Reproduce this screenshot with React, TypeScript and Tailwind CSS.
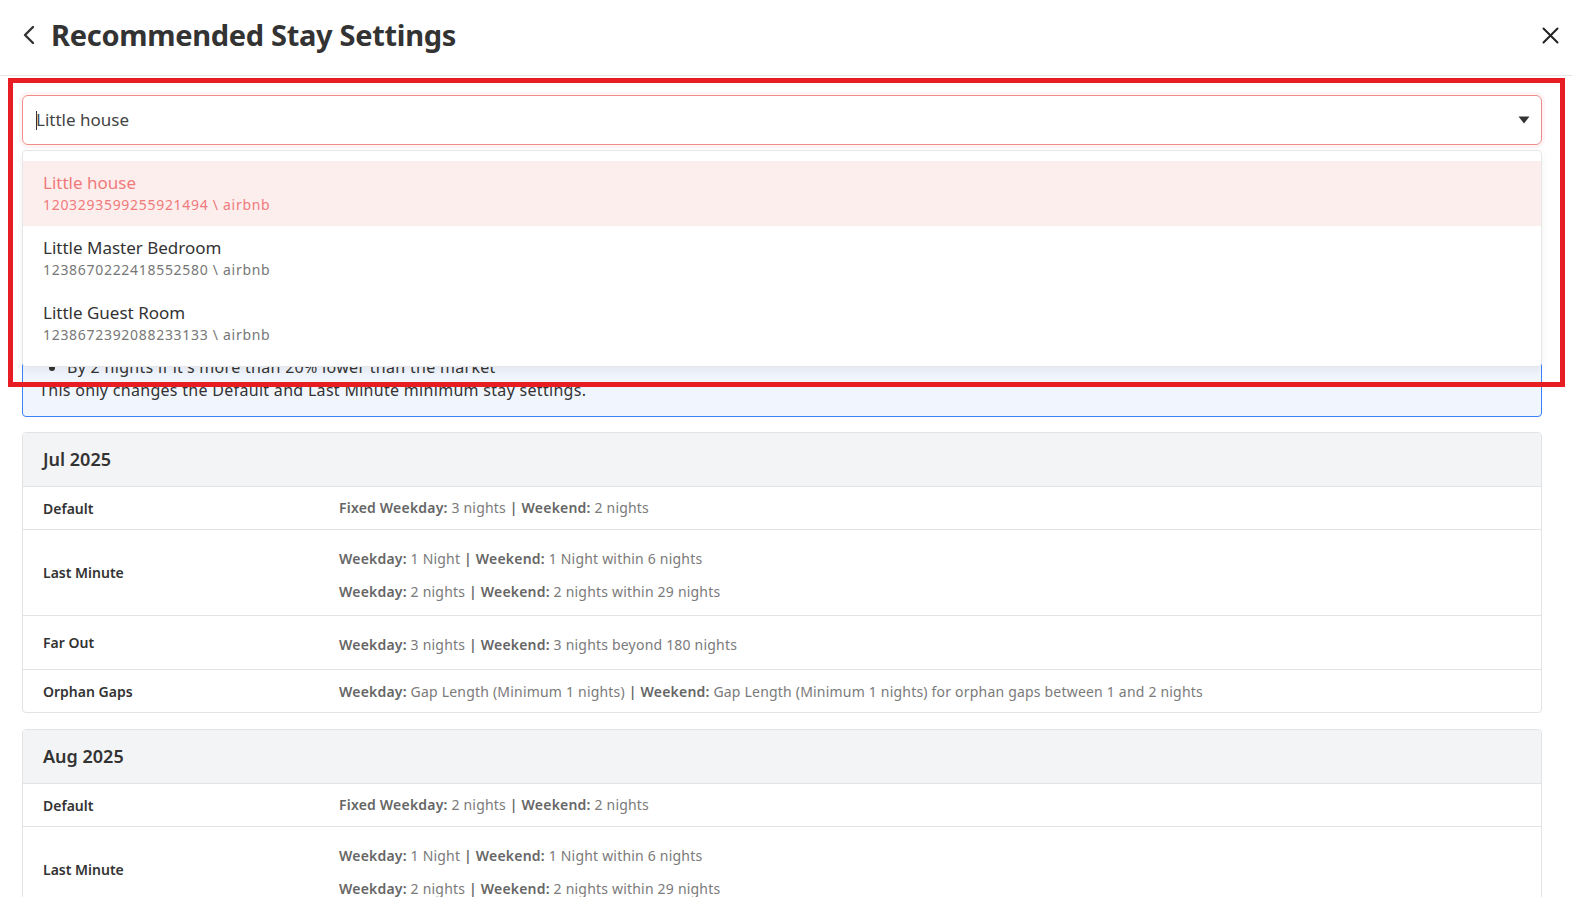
import React from "react";

type Line = { parts: { b?: boolean; t: string }[] };

const F = { fontFamily: '"Noto Sans", "Open Sans", sans-serif' };

function Val({ parts }: Line) {
  return (
    <div className="leading-[20px]">
      {parts.map((p, i) =>
        p.b ? (
          <span key={i} className="font-semibold text-[#666]">{p.t}</span>
        ) : (
          <span key={i}>{p.t}</span>
        )
      )}
    </div>
  );
}

function Row({ label, lines, h, extra }: { label: string; lines: Line[]; h: string; extra?: string }) {
  return (
    <div className={`flex items-center border-t border-[#e3e3e3] ${h}`}>
      <div className="w-[316px] pl-[20px] text-[14px] font-semibold text-[#333]">{label}</div>
      <div className={`flex flex-col ${extra ?? ""} text-[14px] tracking-[0.2px] text-[#7a7a7a]`}>
        {lines.map((l, i) => (
          <Val key={i} parts={l.parts} />
        ))}
      </div>
    </div>
  );
}

function MonthCard({ month, def, rows }: { month: string; def: string; rows: boolean }) {
  return (
    <div className="rounded-[4px] border border-[#e3e3e3] overflow-hidden">
      <div className="h-[53px] flex items-center bg-[#f3f4f6] pl-[20px] text-[18px] font-semibold text-[#333]">
        {month}
      </div>
      <Row
        label="Default"
        h="h-[43px]"
        lines={[{ parts: [{ b: true, t: "Fixed Weekday:" }, { t: ` ${def} nights ` }, { b: true, t: "|" }, { b: true, t: " Weekend:" }, { t: " 2 nights" }] }]}
      />
      <Row
        label="Last Minute"
        h="h-[86px]"
        extra="gap-[13px] pt-[5px]"
        lines={[
          { parts: [{ b: true, t: "Weekday:" }, { t: " 1 Night " }, { b: true, t: "|" }, { b: true, t: " Weekend:" }, { t: " 1 Night within 6 nights" }] },
          { parts: [{ b: true, t: "Weekday:" }, { t: " 2 nights " }, { b: true, t: "|" }, { b: true, t: " Weekend:" }, { t: " 2 nights within 29 nights" }] },
        ]}
      />
      {rows && (
        <>
          <Row
            label="Far Out"
            h="h-[54px]"
            extra="pt-[4px]"
            lines={[{ parts: [{ b: true, t: "Weekday:" }, { t: " 3 nights " }, { b: true, t: "|" }, { b: true, t: " Weekend:" }, { t: " 3 nights beyond 180 nights" }] }]}
          />
          <Row
            label="Orphan Gaps"
            h="h-[43px]"
            extra="pt-[1px]"
            lines={[
              {
                parts: [
                  { b: true, t: "Weekday:" },
                  { t: " Gap Length (Minimum 1 nights) " },
                  { b: true, t: "|" },
                  { b: true, t: " Weekend:" },
                  { t: " Gap Length (Minimum 1 nights) for orphan gaps between 1 and 2 nights" },
                ],
              },
            ]}
          />
        </>
      )}
    </div>
  );
}

const options = [
  { name: "Little house", id: "1203293599255921494 \\ airbnb", active: true },
  { name: "Little Master Bedroom", id: "1238670222418552580 \\ airbnb" },
  { name: "Little Guest Room", id: "1238672392088233133 \\ airbnb" },
];

export default function App() {
  return (
    <div className="relative w-full h-[897px] overflow-hidden bg-white" style={F}>
      {/* Header */}
      <div className="h-[76px] flex items-center justify-between border-b border-[#e5e5e5] pl-[22px] pr-[13px]">
        <div className="flex items-center gap-[15px] pb-[6px]">
          <svg width="14" height="20" viewBox="0 0 14 20" fill="none">
            <path d="M11 2 L3 10 L11 18" stroke="#333" strokeWidth="2.4" strokeLinecap="round" strokeLinejoin="round" />
          </svg>
          <h1 className="text-[29px] font-bold text-[#333] tracking-[-0.3px]">Recommended Stay Settings</h1>
        </div>
        <svg width="17" height="17" viewBox="0 0 17 17" className="mb-[4px]">
          <path d="M1.5 1.5 L15.5 15.5 M15.5 1.5 L1.5 15.5" stroke="#222" strokeWidth="2" strokeLinecap="round" />
        </svg>
      </div>

      <div className="pl-[22px] pr-[30px] pt-[19px]">
        {/* Select */}
        <div className="relative">
          <div className="h-[50px] flex items-center justify-between rounded-[6px] border border-[#f08c8c] shadow-[0_0_0_3px_rgba(240,120,120,0.08)] pl-[13px] pr-[11px]">
            <div className="flex items-center text-[17px] text-[#444]">
              <span className="w-px h-[19px] bg-[#333] mr-[-1px]" />
              <span>Little house</span>
            </div>
            <svg width="12" height="8" viewBox="0 0 12 8">
              <path d="M0.5 0.5 H11.5 L6 7.5 Z" fill="#333" />
            </svg>
          </div>

          {/* Dropdown menu overlay */}
          <div className="absolute left-0 right-0 top-[55px] z-20 rounded-[4px] border border-[#e6e6e6] bg-white shadow-[0_4px_10px_rgba(0,0,0,0.06)] pt-[10px] pb-[10px]">
            {options.map((o) => (
              <div
                key={o.name}
                className={`h-[65px] flex flex-col justify-center pl-[20px] ${o.active ? "bg-[#fdeeee]" : ""}`}
              >
                <div className={`text-[17px] leading-[22px] ${o.active ? "text-[#f07a7a]" : "text-[#333]"}`}>{o.name}</div>
                <div className={`text-[14px] leading-[22px] tracking-[0.7px] ${o.active ? "text-[#f07a7a]" : "text-[#777]"}`}>{o.id}</div>
              </div>
            ))}
          </div>
        </div>

        {/* Info box (partially covered) */}
        <div className="mt-[15px] rounded-[4px] border border-[#3b82f6] bg-[#f1f6fe] pl-[16px] pt-[11px] pb-[14px] text-[16px] leading-[23px] tracking-[0.3px] text-[#333]">
          <div className="font-semibold">Recommendations</div>
          <div>We will adjust your minimum stay settings based on the market:</div>
          <div>Default minimum stay:</div>
          <ul className="pl-[28px] list-disc">
            <li>Increase by 1 night if it's more than 10% higher than the market</li>
            <li>Increase by 2 nights if it's more than 20% higher than the market</li>
          </ul>
          <div>Last minimum stay:</div>
          <ul className="pl-[28px] list-disc">
            <li>Decrease by 1 night if it's more than 10% lower than the market</li>
            <li>By 1 night if it's more than 10% lower than the market</li>
            <li>By 2 nights if it's more than 20% lower than the market</li>
          </ul>
          <div>This only changes the Default and Last Minute minimum stay settings.</div>
        </div>

        <div className="mt-[15px] flex flex-col gap-[16px]">
          <MonthCard month="Jul 2025" def="3" rows />
          <MonthCard month="Aug 2025" def="2" rows />
        </div>
      </div>

      {/* Red annotation box */}
      <div className="pointer-events-none absolute left-[8px] top-[78px] w-[1557px] h-[309px] border-[5px] border-[#e81c23] z-30" />
    </div>
  );
}
